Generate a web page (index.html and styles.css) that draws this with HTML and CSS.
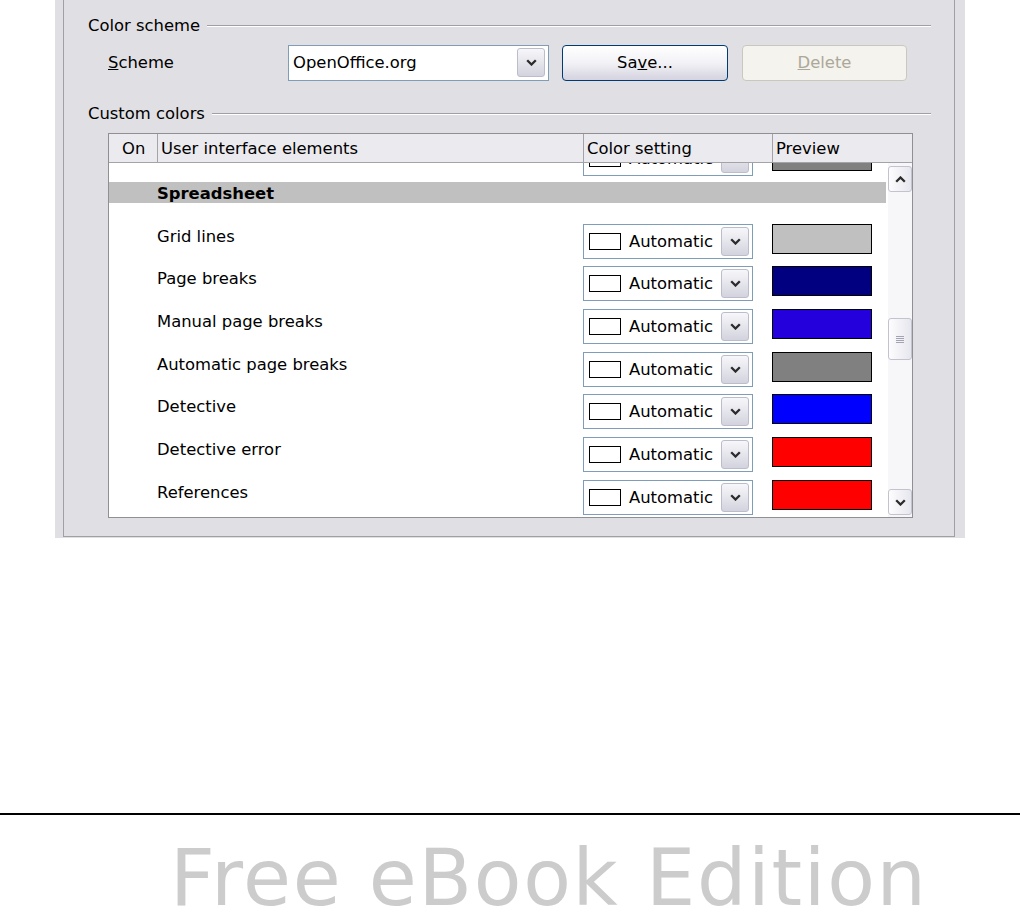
FILE: index.html
```html
<!DOCTYPE html>
<html lang="en">
<head>
  <meta charset="UTF-8">
  <title>Options - Appearance</title>
  <link rel="stylesheet" href="styles.css">
</head>
<body>

  <div class="dialog">
    <div class="frame">

      <div class="group-title"><span>Color scheme</span><div class="rule"></div></div>

      <div class="scheme-row">
        <label class="scheme-label"><u>S</u>cheme</label>
        <div class="combo">
          <span class="combo-text">OpenOffice.org</span>
          <span class="drop"><svg width="11" height="7" viewBox="0 0 11 7"><path d="M1.2 1.2 L5.5 5.5 L9.8 1.2" fill="none" stroke="#2b2b2b" stroke-width="2.3"/></svg></span>
        </div>
        <button class="btn btn-save">Sa<u>v</u>e...</button>
        <button class="btn btn-delete" disabled><u>D</u>elete</button>
      </div>

      <div class="group-title second"><span>Custom colors</span><div class="rule"></div></div>

      <div class="list">
        <div class="list-head">
          <div class="head-cell col-on">On</div>
          <div class="head-cell">User interface elements</div>
          <div class="head-cell">Color setting</div>
          <div class="head-cell">Preview</div>
        </div>

        <div class="list-body">
          <div class="rows">

            <div class="row partial">
              <div class="name"></div>
              <div class="cell"><div class="pick"><span class="chip"></span><span class="pick-text">Automatic</span><span class="drop"><svg width="11" height="7" viewBox="0 0 11 7"><path d="M1.2 1.2 L5.5 5.5 L9.8 1.2" fill="none" stroke="#2b2b2b" stroke-width="2.3"/></svg></span></div></div>
              <div class="cell"><div class="swatch" style="background: #808080;"></div></div>
            </div>

            <div class="category"><div class="category-bar">Spreadsheet</div></div>

            <div class="row">
              <div class="name">Grid lines</div>
              <div class="cell"><div class="pick"><span class="chip"></span><span class="pick-text">Automatic</span><span class="drop"><svg width="11" height="7" viewBox="0 0 11 7"><path d="M1.2 1.2 L5.5 5.5 L9.8 1.2" fill="none" stroke="#2b2b2b" stroke-width="2.3"/></svg></span></div></div>
              <div class="cell"><div class="swatch" style="background: #c0c0c0;"></div></div>
            </div>

            <div class="row">
              <div class="name">Page breaks</div>
              <div class="cell"><div class="pick"><span class="chip"></span><span class="pick-text">Automatic</span><span class="drop"><svg width="11" height="7" viewBox="0 0 11 7"><path d="M1.2 1.2 L5.5 5.5 L9.8 1.2" fill="none" stroke="#2b2b2b" stroke-width="2.3"/></svg></span></div></div>
              <div class="cell"><div class="swatch" style="background: #000080;"></div></div>
            </div>

            <div class="row">
              <div class="name">Manual page breaks</div>
              <div class="cell"><div class="pick"><span class="chip"></span><span class="pick-text">Automatic</span><span class="drop"><svg width="11" height="7" viewBox="0 0 11 7"><path d="M1.2 1.2 L5.5 5.5 L9.8 1.2" fill="none" stroke="#2b2b2b" stroke-width="2.3"/></svg></span></div></div>
              <div class="cell"><div class="swatch" style="background: #2300dc;"></div></div>
            </div>

            <div class="row">
              <div class="name">Automatic page breaks</div>
              <div class="cell"><div class="pick"><span class="chip"></span><span class="pick-text">Automatic</span><span class="drop"><svg width="11" height="7" viewBox="0 0 11 7"><path d="M1.2 1.2 L5.5 5.5 L9.8 1.2" fill="none" stroke="#2b2b2b" stroke-width="2.3"/></svg></span></div></div>
              <div class="cell"><div class="swatch" style="background: #808080;"></div></div>
            </div>

            <div class="row">
              <div class="name">Detective</div>
              <div class="cell"><div class="pick"><span class="chip"></span><span class="pick-text">Automatic</span><span class="drop"><svg width="11" height="7" viewBox="0 0 11 7"><path d="M1.2 1.2 L5.5 5.5 L9.8 1.2" fill="none" stroke="#2b2b2b" stroke-width="2.3"/></svg></span></div></div>
              <div class="cell"><div class="swatch" style="background: #0000ff;"></div></div>
            </div>

            <div class="row">
              <div class="name">Detective error</div>
              <div class="cell"><div class="pick"><span class="chip"></span><span class="pick-text">Automatic</span><span class="drop"><svg width="11" height="7" viewBox="0 0 11 7"><path d="M1.2 1.2 L5.5 5.5 L9.8 1.2" fill="none" stroke="#2b2b2b" stroke-width="2.3"/></svg></span></div></div>
              <div class="cell"><div class="swatch" style="background: #ff0000;"></div></div>
            </div>

            <div class="row">
              <div class="name">References</div>
              <div class="cell"><div class="pick"><span class="chip"></span><span class="pick-text">Automatic</span><span class="drop"><svg width="11" height="7" viewBox="0 0 11 7"><path d="M1.2 1.2 L5.5 5.5 L9.8 1.2" fill="none" stroke="#2b2b2b" stroke-width="2.3"/></svg></span></div></div>
              <div class="cell"><div class="swatch" style="background: #ff0000;"></div></div>
            </div>

          </div>

          <!-- vertical scrollbar -->
          <div class="scrollbar">
            <div class="sb-btn"><svg width="11" height="7" viewBox="0 0 11 7"><path d="M1.2 5.8 L5.5 1.5 L9.8 5.8" fill="none" stroke="#2b2b2b" stroke-width="2.3"/></svg></div>
            <div class="sb-thumb"><svg width="8" height="9" viewBox="0 0 8 9"><path d="M0 1.5 H8 M0 3.5 H8 M0 5.5 H8 M0 7.5 H8" stroke="#a3a3b3" stroke-width="1"/></svg></div>
            <div class="sb-btn sb-down"><svg width="11" height="7" viewBox="0 0 11 7"><path d="M1.2 1.2 L5.5 5.5 L9.8 1.2" fill="none" stroke="#2b2b2b" stroke-width="2.3"/></svg></div>
          </div>
        </div>
      </div>

    </div>
  </div>

  <hr class="page-rule">
  <div class="watermark">Free eBook Edition</div>

</body>
</html>
```

FILE: styles.css
```css
body {
  margin: 0;
  padding: 0;
  background-color: #ffffff;
  font-family: "DejaVu Sans", Verdana, sans-serif;
  color: #000000;
}

.dialog {
  width: 910px;
  height: 538px;
  margin: 0 auto;
  padding: 0 10px 1px 8px;
  box-sizing: border-box;
  background-color: #e0dfe3;
  font-size: 16.4px;
}

.frame {
  height: 537px;
  box-sizing: border-box;
  border: 1px solid #a0a0a4;
  border-top: none;
  padding: 16px 23px 0 24px;
}

.group-title {
  display: flex;
  align-items: center;
  height: 19px;
  line-height: 19px;
}

.group-title.second {
  margin-top: 23px;
}

.group-title .rule {
  flex: 1;
  margin-left: 7px;
  border-top: 1px solid #a0a0a4;
  border-bottom: 1px solid #ffffff;
}

.scheme-row {
  display: flex;
  align-items: center;
  height: 37px;
  margin-top: 9px;
  padding-left: 20px;
}

.scheme-label {
  width: 180px;
}

.combo {
  width: 261px;
  height: 36px;
  box-sizing: border-box;
  border: 1px solid #7f9db9;
  background-color: #ffffff;
  display: flex;
  align-items: center;
  padding: 0 3px 0 4px;
}

.combo-text {
  flex: 1;
}

.drop {
  width: 28px;
  height: 29px;
  box-sizing: border-box;
  border: 1px solid #bcbccc;
  border-radius: 3px;
  background: linear-gradient(#f7f7fa, #d3d3de);
  display: flex;
  align-items: center;
  justify-content: center;
}

.btn {
  height: 36px;
  box-sizing: border-box;
  font-family: inherit;
  font-size: 16.4px;
  border-radius: 4px;
  padding: 0;
}

.btn-save {
  width: 166px;
  margin-left: 13px;
  border: 1px solid #003c74;
  background: linear-gradient(#ffffff, #f2f2f6 50%, #d4d3df);
  color: #000000;
}

.btn-delete {
  width: 165px;
  margin-left: 14px;
  border: 1px solid #cac8bd;
  background-color: #f4f3ee;
  color: #aca899;
}

.list {
  width: 805px;
  height: 385px;
  margin: 10px 0 0 20px;
  box-sizing: border-box;
  border: 1px solid #8f8f94;
  background-color: #ffffff;
}

.list-head {
  display: grid;
  grid-template-columns: 48px 426px 189px 1fr;
  height: 29px;
  box-sizing: border-box;
  background-color: #ebeaee;
  border-bottom: 1px solid #a4a4a8;
}

.head-cell {
  padding: 5px 0 0 3px;
  line-height: 19px;
  border-left: 1px solid #a4a4a8;
}

.head-cell.col-on {
  border-left: none;
  padding-left: 13px;
}

.list-body {
  display: flex;
  height: 354px;
  overflow: hidden;
}

.rows {
  width: 779px;
  flex: none;
  overflow: hidden;
}

.row {
  display: grid;
  grid-template-columns: 474px 189px 1fr;
  height: 42.67px;
}

.row.partial {
  margin-top: -24px;
}

.name {
  padding: 5px 0 0 48px;
  line-height: 19px;
}

.cell {
  padding-top: 2px;
}

.category {
  height: 40px;
}

.category-bar {
  height: 21px;
  margin-right: 2px;
  box-sizing: border-box;
  padding: 2px 0 0 48px;
  line-height: 19px;
  background-color: #c0c0c0;
  font-weight: bold;
}

.pick {
  width: 170px;
  height: 35px;
  box-sizing: border-box;
  border: 1px solid #7f9db9;
  display: flex;
  align-items: center;
  padding: 0 3px 0 5px;
}

.chip {
  width: 32px;
  height: 17px;
  box-sizing: border-box;
  border: 1px solid #000000;
  margin-right: 8px;
}

.pick-text {
  flex: 1;
}

.swatch {
  width: 100px;
  height: 30px;
  box-sizing: border-box;
  border: 1px solid #000000;
}

.scrollbar {
  width: 24px;
  flex: none;
  display: flex;
  flex-direction: column;
  padding: 3px 0 2px;
  box-sizing: border-box;
  background-color: #f7f7f9;
}

.sb-btn,
.sb-thumb {
  box-sizing: border-box;
  border: 1px solid #c3c3d0;
  border-radius: 3px;
  background: linear-gradient(90deg, #fdfdfe, #e6e6ee);
  display: flex;
  align-items: center;
  justify-content: center;
}

.sb-btn {
  height: 26px;
}

.sb-thumb {
  height: 42px;
  margin-top: 126px;
}

.sb-down {
  margin-top: auto;
}

.page-rule {
  margin: 275px 0 0;
  border: 0;
  border-top: 2px solid #000000;
  height: 0;
}

.watermark {
  margin-top: 30px;
  padding-left: 170px;
  font-family: "DejaVu Sans", sans-serif;
  font-size: 78px;
  line-height: 0.85;
  letter-spacing: 1.7px;
  color: #cccccc;
  white-space: nowrap;
}
```
